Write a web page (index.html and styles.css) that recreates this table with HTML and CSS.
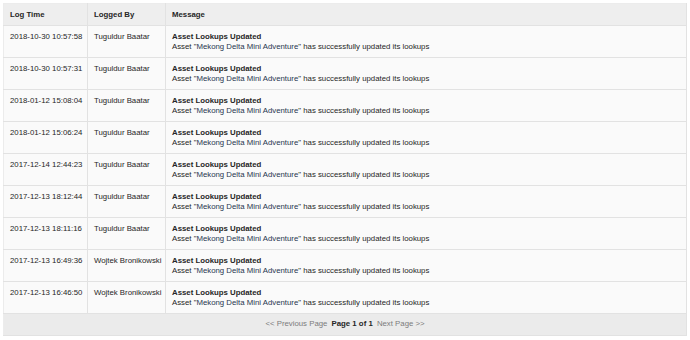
FILE: index.html
```html
<!DOCTYPE html>
<html lang="en">
<head>
  <meta charset="UTF-8">
  <title>Asset Log</title>
  <link rel="stylesheet" href="styles.css">
</head>
<body>
  <table class="log-table">
    <thead>
      <tr>
        <th class="col-time">Log Time</th>
        <th class="col-user">Logged By</th>
        <th>Message</th>
      </tr>
    </thead>
    <tbody>
      <tr>
        <td>2018-10-30 10:57:58</td>
        <td>Tuguldur Baatar</td>
        <td><div class="msg-title">Asset Lookups Updated</div>Asset "<a href="#" class="asset-link">Mekong Delta Mini Adventure</a>" has successfully updated its lookups</td>
      </tr>
      <tr>
        <td>2018-10-30 10:57:31</td>
        <td>Tuguldur Baatar</td>
        <td><div class="msg-title">Asset Lookups Updated</div>Asset "<a href="#" class="asset-link">Mekong Delta Mini Adventure</a>" has successfully updated its lookups</td>
      </tr>
      <tr>
        <td>2018-01-12 15:08:04</td>
        <td>Tuguldur Baatar</td>
        <td><div class="msg-title">Asset Lookups Updated</div>Asset "<a href="#" class="asset-link">Mekong Delta Mini Adventure</a>" has successfully updated its lookups</td>
      </tr>
      <tr>
        <td>2018-01-12 15:06:24</td>
        <td>Tuguldur Baatar</td>
        <td><div class="msg-title">Asset Lookups Updated</div>Asset "<a href="#" class="asset-link">Mekong Delta Mini Adventure</a>" has successfully updated its lookups</td>
      </tr>
      <tr>
        <td>2017-12-14 12:44:23</td>
        <td>Tuguldur Baatar</td>
        <td><div class="msg-title">Asset Lookups Updated</div>Asset "<a href="#" class="asset-link">Mekong Delta Mini Adventure</a>" has successfully updated its lookups</td>
      </tr>
      <tr>
        <td>2017-12-13 18:12:44</td>
        <td>Tuguldur Baatar</td>
        <td><div class="msg-title">Asset Lookups Updated</div>Asset "<a href="#" class="asset-link">Mekong Delta Mini Adventure</a>" has successfully updated its lookups</td>
      </tr>
      <tr>
        <td>2017-12-13 18:11:16</td>
        <td>Tuguldur Baatar</td>
        <td><div class="msg-title">Asset Lookups Updated</div>Asset "<a href="#" class="asset-link">Mekong Delta Mini Adventure</a>" has successfully updated its lookups</td>
      </tr>
      <tr>
        <td>2017-12-13 16:49:36</td>
        <td>Wojtek Bronikowski</td>
        <td><div class="msg-title">Asset Lookups Updated</div>Asset "<a href="#" class="asset-link">Mekong Delta Mini Adventure</a>" has successfully updated its lookups</td>
      </tr>
      <tr>
        <td>2017-12-13 16:46:50</td>
        <td>Wojtek Bronikowski</td>
        <td><div class="msg-title">Asset Lookups Updated</div>Asset "<a href="#" class="asset-link">Mekong Delta Mini Adventure</a>" has successfully updated its lookups</td>
      </tr>
    </tbody>
    <tfoot>
      <tr>
        <td colspan="3" class="pager">
          <a href="#" class="pager-link">&lt;&lt; Previous Page</a>
          <span class="pager-current">Page 1 of 1</span>
          <a href="#" class="pager-link">Next Page &gt;&gt;</a>
        </td>
      </tr>
    </tfoot>
  </table>
</body>
</html>
```

FILE: styles.css
```css
:root {
  --text-color: #262626;
  --text-light: #7c7c7c;
  --border-color: #e2e2e2;
  --header-bg: #eeeeee;
  --row-bg: #fafafa;
  --footer-bg: #ebebeb;
}

* {
  box-sizing: border-box;
  margin: 0;
  padding: 0;
}

body {
  font-family: 'Liberation Sans', Arial, sans-serif;
  font-size: 7.8px;
  line-height: 10.5px;
  color: var(--text-color);
  background-color: #fff;
  padding: 3px;
}

.log-table {
  width: 684px;
  table-layout: fixed;
  border-collapse: collapse;
  border: 1px solid #ececec;
}

.log-table th {
  background-color: var(--header-bg);
  text-align: left;
  font-weight: 700;
  padding: 6px 6px 4px;
  border-bottom: 1px solid var(--border-color);
  border-right: 1px solid var(--border-color);
}

.log-table td {
  background-color: var(--row-bg);
  vertical-align: top;
  padding: 6px 6px 4px;
  height: 32px;
  border-bottom: 1px solid var(--border-color);
  border-right: 1px solid var(--border-color);
  white-space: nowrap;
}

.col-time {
  width: 84px;
}

.col-user {
  width: 78px;
}

.msg-title {
  font-weight: 700;
}

.asset-link {
  color: #27364f;
  text-decoration: none;
}

.log-table td.pager {
  background-color: var(--footer-bg);
  text-align: center;
  height: 22px;
  vertical-align: middle;
  padding: 5px 6px;
}

.pager-link {
  color: var(--text-light);
  text-decoration: none;
}

.pager-current {
  font-weight: 700;
  margin: 0 2px;
}
```
